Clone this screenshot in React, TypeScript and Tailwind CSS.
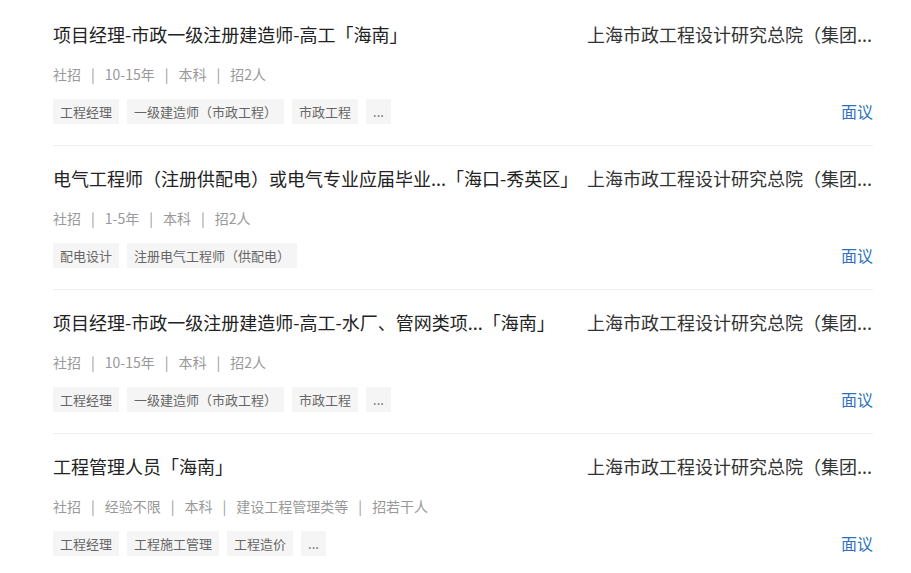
import React from "react";

type Job = {
  name: string;
  loc: string;
  company: string;
  meta: string[];
  tags: string[];
  salary: string;
};

const jobs: Job[] = [
  {
    name: "项目经理-市政一级注册建造师-高工",
    loc: "「海南」",
    company: "上海市政工程设计研究总院（集团...",
    meta: ["社招", "10-15年", "本科", "招2人"],
    tags: ["工程经理", "一级建造师（市政工程）", "市政工程", "..."],
    salary: "面议",
  },
  {
    name: "电气工程师（注册供配电）或电气专业应届毕业...",
    loc: "「海口-秀英区」",
    company: "上海市政工程设计研究总院（集团...",
    meta: ["社招", "1-5年", "本科", "招2人"],
    tags: ["配电设计", "注册电气工程师（供配电）"],
    salary: "面议",
  },
  {
    name: "项目经理-市政一级注册建造师-高工-水厂、管网类项...",
    loc: "「海南」",
    company: "上海市政工程设计研究总院（集团...",
    meta: ["社招", "10-15年", "本科", "招2人"],
    tags: ["工程经理", "一级建造师（市政工程）", "市政工程", "..."],
    salary: "面议",
  },
  {
    name: "工程管理人员",
    loc: "「海南」",
    company: "上海市政工程设计研究总院（集团...",
    meta: ["社招", "经验不限", "本科", "建设工程管理类等", "招若干人"],
    tags: ["工程经理", "工程施工管理", "工程造价", "..."],
    salary: "面议",
  },
];

export default function App() {
  return (
    <div className="min-h-screen bg-white font-['Noto_Sans_CJK_SC','Noto_Sans',sans-serif]">
      <div className="ml-[53px] w-[820px] pt-[2px]">
        {jobs.map((j, i) => (
          <div
            key={i}
            className={`flex flex-col pt-[20px] pb-[21px] ${i < jobs.length - 1 ? "border-b border-[#eeeeee]" : ""}`}
          >
            <div className="flex h-[24px] items-center justify-between leading-[24px]">
              <div className="flex min-w-0 whitespace-nowrap text-[18px] text-[#222222]">
                <span>{j.name}</span>
                <span>{j.loc}</span>
              </div>
              <div className="w-[286px] shrink-0 overflow-hidden whitespace-nowrap text-[18px] text-[#333333]">
                {j.company}
              </div>
            </div>
            <div className="mt-[18px] flex h-[20px] items-center text-[14px] leading-[20px] text-[#999999]">
              {j.meta.map((m, k) => (
                <React.Fragment key={k}>
                  {k > 0 && <span className="mx-[10px]">|</span>}
                  <span>{m}</span>
                </React.Fragment>
              ))}
            </div>
            <div className="mt-[15px] flex h-[25px] items-center justify-between">
              <div className="flex gap-2">
                {j.tags.map((t, k) => (
                  <span
                    key={k}
                    className="h-[25px] bg-[#f5f5f5] px-[7px] text-[13px] leading-[25px] text-[#666666]"
                  >
                    {t}
                  </span>
                ))}
              </div>
              <span className="text-[16px] leading-[25px] text-[#2f72c0]">{j.salary}</span>
            </div>
          </div>
        ))}
      </div>
    </div>
  );
}
